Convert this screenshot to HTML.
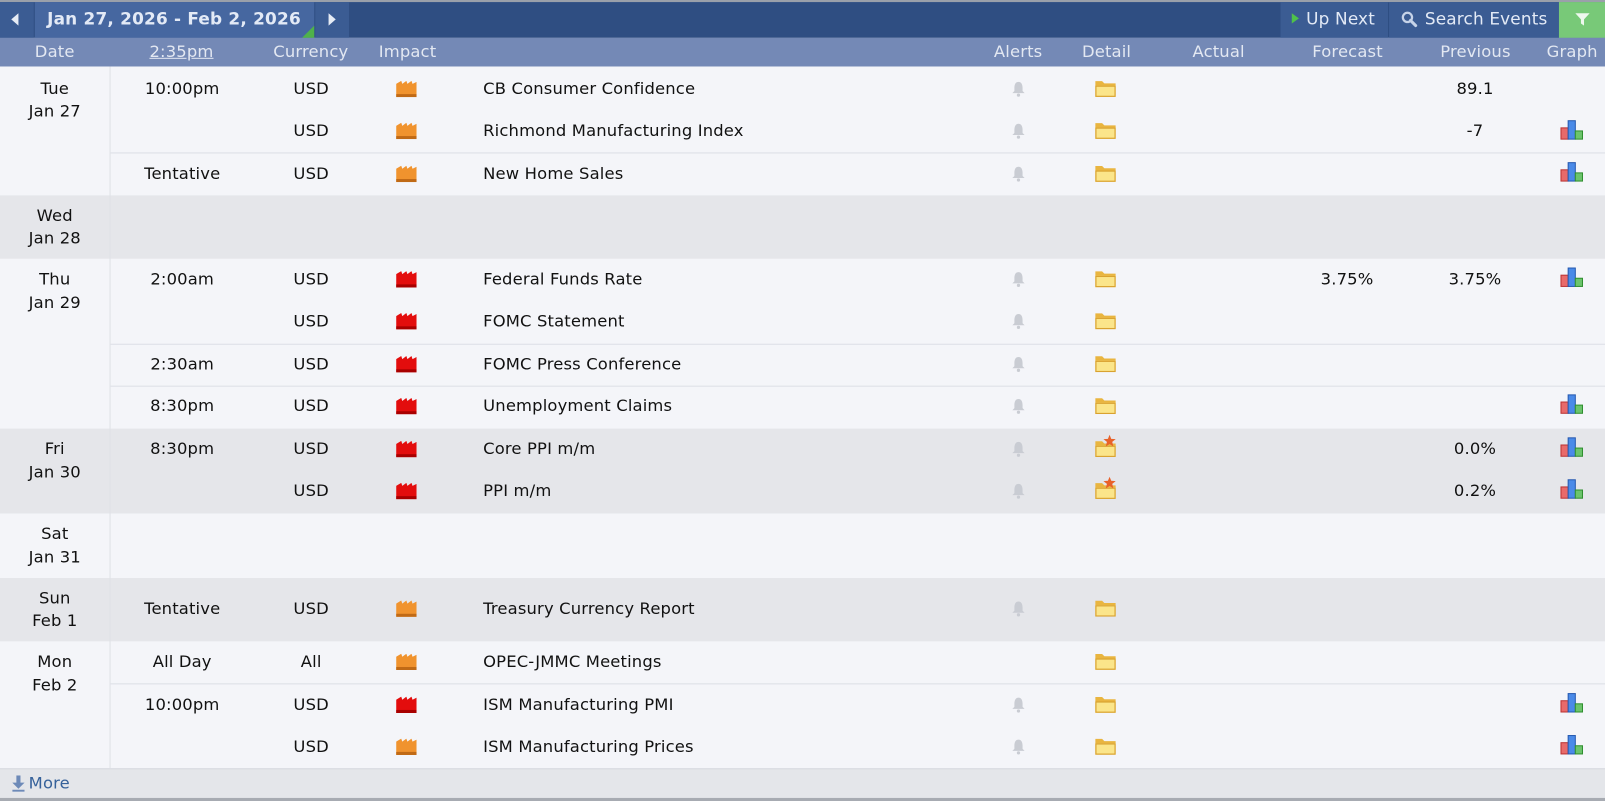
<!DOCTYPE html>
<html><head><meta charset="utf-8">
<style>
html,body{margin:0;padding:0;width:1605px;height:801px;overflow:hidden;background:#f4f5f9;}
#w{position:absolute;left:0;top:0;width:1568px;height:783px;transform-origin:0 0;transform:scale(1.02360,1.02299);font-family:"DejaVu Sans","Liberation Sans",sans-serif;font-size:16px;letter-spacing:0.15px;color:#111;}
.a{position:absolute;}
.t{position:absolute;transform:translateY(-50%);white-space:nowrap;line-height:20px;}
.c{text-align:center;}
.hd{position:absolute;top:50px;transform:translateY(-50%);color:#e3e8f2;font-size:16px;white-space:nowrap;}
.line{position:absolute;left:108px;right:0;height:1px;background:#dcdfe6;}
</style></head><body><div id="w">
<div class="a" style="left:0;top:0;width:1568px;height:2px;background:#9aa0aa"></div>
<div class="a" style="left:0;top:2px;width:1568px;height:35px;background:#2f4e82"></div>
<div class="a" style="left:0;top:2px;width:33px;height:35px;background:#3b5c93"></div>
<div class="a" style="left:11px;top:13px;width:0;height:0;border-top:6px solid transparent;border-bottom:6px solid transparent;border-right:7px solid #e6ecf5"></div>
<div class="a" style="left:34px;top:2px;width:273px;height:35px;background:#4667a0"></div>
<div class="a" style="left:295px;top:25px;width:0;height:0;border-left:12px solid transparent;border-bottom:12px solid #4fb24a"></div>
<div class="t" style="left:46px;top:19px;color:#e3eaf6;font-weight:bold;font-size:16.5px;letter-spacing:0.2px">Jan 27, 2026 - Feb 2, 2026</div>
<div class="a" style="left:308px;top:2px;width:33px;height:35px;background:#3b5c93"></div>
<div class="a" style="left:321px;top:13px;width:0;height:0;border-top:6px solid transparent;border-bottom:6px solid transparent;border-left:7px solid #e6ecf5"></div>
<div class="a" style="left:1251px;top:2px;width:105px;height:35px;background:#3b5c93"></div>
<div class="a" style="left:1262px;top:13px;width:0;height:0;border-top:5px solid transparent;border-bottom:5px solid transparent;border-left:7px solid #4fc24a"></div>
<div class="t" style="left:1276px;top:19px;color:#e3eaf6;font-size:16.5px">Up Next</div>
<div class="a" style="left:1357px;top:2px;width:166px;height:35px;background:#3b5c93"></div>
<svg class="a" style="left:1368px;top:10px" width="18" height="18" viewBox="0 0 18 18"><circle cx="7" cy="7" r="4.5" fill="none" stroke="#c6d3e8" stroke-width="2.2"/><path d="M10 10 L15 15" stroke="#c6d3e8" stroke-width="3" stroke-linecap="round"/></svg>
<div class="t" style="left:1392px;top:19px;color:#e3eaf6;font-size:16.5px">Search Events</div>
<div class="a" style="left:1523px;top:2px;width:45px;height:35px;background:#78c978"></div>
<svg class="a" style="left:1538px;top:11px" width="16" height="16" viewBox="0 0 16 16"><path d="M1 2 H15 L9.5 8 V14 L6.5 12 V8 Z" fill="#eef8ee"/></svg>
<div class="a" style="left:0;top:37px;width:1568px;height:28px;background:#7489b6"></div>
<div class="hd" style="left:34px">Date</div>
<div class="hd" style="left:146px;text-decoration:underline">2:35pm</div>
<div class="hd" style="left:267px">Currency</div>
<div class="hd" style="left:370px">Impact</div>
<div class="hd" style="left:971px">Alerts</div>
<div class="hd" style="left:1057px">Detail</div>
<div class="hd" style="left:1165px">Actual</div>
<div class="hd" style="left:1282px">Forecast</div>
<div class="hd" style="left:1407px">Previous</div>
<div class="hd" style="left:1511px">Graph</div>
<div class="a" style="left:0;top:65px;width:1568px;height:126px;background:#f4f5f9"></div>
<div class="a" style="left:0;top:191px;width:1568px;height:62px;background:#e5e6ea"></div>
<div class="a" style="left:0;top:253px;width:1568px;height:166px;background:#f4f5f9"></div>
<div class="a" style="left:0;top:419px;width:1568px;height:83px;background:#e5e6ea"></div>
<div class="a" style="left:0;top:502px;width:1568px;height:63px;background:#f4f5f9"></div>
<div class="a" style="left:0;top:565px;width:1568px;height:62px;background:#e5e6ea"></div>
<div class="a" style="left:0;top:627px;width:1568px;height:124px;background:#f4f5f9"></div>
<div class="a" style="left:0;top:751px;width:1568px;height:29px;background:#e4e6ea;border-top:1px solid #d6d9df"></div>
<div class="a" style="left:0;top:780px;width:1568px;height:3px;background:#a7abb2"></div>
<div class="a" style="left:107px;top:65px;width:1px;height:686px;background:#dfe1e6"></div>
<div class="line" style="top:149px"></div>
<div class="line" style="top:336px"></div>
<div class="line" style="top:377px"></div>
<div class="line" style="top:668px"></div>
<div class="t c" style="left:0;width:107px;top:87px">Tue</div><div class="t c" style="left:0;width:107px;top:109px">Jan 27</div>
<div class="t c" style="left:0;width:107px;top:211px">Wed</div><div class="t c" style="left:0;width:107px;top:233px">Jan 28</div>
<div class="t c" style="left:0;width:107px;top:273px">Thu</div><div class="t c" style="left:0;width:107px;top:296px">Jan 29</div>
<div class="t c" style="left:0;width:107px;top:439px">Fri</div><div class="t c" style="left:0;width:107px;top:462px">Jan 30</div>
<div class="t c" style="left:0;width:107px;top:522px">Sat</div><div class="t c" style="left:0;width:107px;top:545px">Jan 31</div>
<div class="t c" style="left:0;width:107px;top:585px">Sun</div><div class="t c" style="left:0;width:107px;top:607px">Feb 1</div>
<div class="t c" style="left:0;width:107px;top:647px">Mon</div><div class="t c" style="left:0;width:107px;top:670px">Feb 2</div>

<svg width="0" height="0" style="position:absolute">
<defs>
<symbol id="io" viewBox="0 0 20 16"><path d="M0 3 L5 0 L6 3 L10 0 L11 3 L15 0 L16 3 L20 1 V16 H0 Z" fill="#f0932e"/><rect x="0" y="13" width="20" height="3" fill="#c06a16"/></symbol>
<symbol id="ir" viewBox="0 0 20 16"><path d="M0 3 L5 0 L6 3 L10 0 L11 3 L15 0 L16 3 L20 1 V16 H0 Z" fill="#e30d0d"/><rect x="0" y="13" width="20" height="3" fill="#a80000"/></symbol>
<symbol id="bell" viewBox="0 0 14 16"><path d="M7 1 C4 1 3 4 3 7 V10 L1 12 H13 L11 10 V7 C11 4 10 1 7 1 Z" fill="#c9ccd3"/><circle cx="7" cy="14" r="1.6" fill="#c9ccd3"/></symbol>
<symbol id="fold" viewBox="0 0 20 16"><path d="M1 1 H7 L9 3 H19 V15 H1 Z" fill="#e9b540"/><path d="M1 5 H19 V15 H1 Z" fill="#fbe58a"/><rect x="1.5" y="5.5" width="17" height="9" fill="none" stroke="#d9a230" stroke-width="1"/></symbol>
<symbol id="gr" viewBox="0 0 24 20"><rect x="1" y="8" width="7" height="11" fill="#e86a6a" stroke="#b33" stroke-width="1"/><rect x="8" y="1" width="7" height="18" fill="#4a8ae8" stroke="#2559b0" stroke-width="1"/><rect x="15" y="11" width="7" height="8" fill="#6cc46c" stroke="#2f8f2f" stroke-width="1"/></symbol>
<symbol id="star" viewBox="0 0 12 12"><path d="M6 0 L7.6 4 L12 4.3 L8.6 7 L9.7 11.5 L6 9 L2.3 11.5 L3.4 7 L0 4.3 L4.4 4 Z" fill="#e8622a"/></symbol>
</defs></svg>

<div class="t c" style="left:120px;width:116px;top:87px">10:00pm</div>
<div class="t c" style="left:254px;width:100px;top:87px">USD</div>
<svg class="a" style="left:387px;top:79px" width="20" height="16"><use href="#io"/></svg>
<div class="t" style="left:472px;top:87px">CB Consumer Confidence</div>
<svg class="a" style="left:988px;top:79px" width="14" height="16"><use href="#bell"/></svg>
<svg class="a" style="left:1069px;top:78px" width="22" height="18"><use href="#fold"/></svg>
<div class="t c" style="left:1391px;width:100px;top:87px">89.1</div>

<div class="t c" style="left:254px;width:100px;top:128px">USD</div>
<svg class="a" style="left:387px;top:120px" width="20" height="16"><use href="#io"/></svg>
<div class="t" style="left:472px;top:128px">Richmond Manufacturing Index</div>
<svg class="a" style="left:988px;top:120px" width="14" height="16"><use href="#bell"/></svg>
<svg class="a" style="left:1069px;top:119px" width="22" height="18"><use href="#fold"/></svg>
<div class="t c" style="left:1391px;width:100px;top:128px">-7</div>
<svg class="a" style="left:1524px;top:117px" width="24" height="20"><use href="#gr"/></svg>

<div class="t c" style="left:120px;width:116px;top:170px">Tentative</div>
<div class="t c" style="left:254px;width:100px;top:170px">USD</div>
<svg class="a" style="left:387px;top:162px" width="20" height="16"><use href="#io"/></svg>
<div class="t" style="left:472px;top:170px">New Home Sales</div>
<svg class="a" style="left:988px;top:162px" width="14" height="16"><use href="#bell"/></svg>
<svg class="a" style="left:1069px;top:161px" width="22" height="18"><use href="#fold"/></svg>
<svg class="a" style="left:1524px;top:158px" width="24" height="20"><use href="#gr"/></svg>

<div class="t c" style="left:120px;width:116px;top:273px">2:00am</div>
<div class="t c" style="left:254px;width:100px;top:273px">USD</div>
<svg class="a" style="left:387px;top:265px" width="20" height="16"><use href="#ir"/></svg>
<div class="t" style="left:472px;top:273px">Federal Funds Rate</div>
<svg class="a" style="left:988px;top:265px" width="14" height="16"><use href="#bell"/></svg>
<svg class="a" style="left:1069px;top:264px" width="22" height="18"><use href="#fold"/></svg>
<div class="t c" style="left:1266px;width:100px;top:273px">3.75%</div>
<div class="t c" style="left:1391px;width:100px;top:273px">3.75%</div>
<svg class="a" style="left:1524px;top:261px" width="24" height="20"><use href="#gr"/></svg>

<div class="t c" style="left:254px;width:100px;top:314px">USD</div>
<svg class="a" style="left:387px;top:306px" width="20" height="16"><use href="#ir"/></svg>
<div class="t" style="left:472px;top:314px">FOMC Statement</div>
<svg class="a" style="left:988px;top:306px" width="14" height="16"><use href="#bell"/></svg>
<svg class="a" style="left:1069px;top:305px" width="22" height="18"><use href="#fold"/></svg>

<div class="t c" style="left:120px;width:116px;top:356px">2:30am</div>
<div class="t c" style="left:254px;width:100px;top:356px">USD</div>
<svg class="a" style="left:387px;top:348px" width="20" height="16"><use href="#ir"/></svg>
<div class="t" style="left:472px;top:356px">FOMC Press Conference</div>
<svg class="a" style="left:988px;top:348px" width="14" height="16"><use href="#bell"/></svg>
<svg class="a" style="left:1069px;top:347px" width="22" height="18"><use href="#fold"/></svg>

<div class="t c" style="left:120px;width:116px;top:397px">8:30pm</div>
<div class="t c" style="left:254px;width:100px;top:397px">USD</div>
<svg class="a" style="left:387px;top:389px" width="20" height="16"><use href="#ir"/></svg>
<div class="t" style="left:472px;top:397px">Unemployment Claims</div>
<svg class="a" style="left:988px;top:389px" width="14" height="16"><use href="#bell"/></svg>
<svg class="a" style="left:1069px;top:388px" width="22" height="18"><use href="#fold"/></svg>
<svg class="a" style="left:1524px;top:385px" width="24" height="20"><use href="#gr"/></svg>

<div class="t c" style="left:120px;width:116px;top:439px">8:30pm</div>
<div class="t c" style="left:254px;width:100px;top:439px">USD</div>
<svg class="a" style="left:387px;top:431px" width="20" height="16"><use href="#ir"/></svg>
<div class="t" style="left:472px;top:439px">Core PPI m/m</div>
<svg class="a" style="left:988px;top:431px" width="14" height="16"><use href="#bell"/></svg>
<svg class="a" style="left:1069px;top:430px" width="22" height="18"><use href="#fold"/></svg>
<svg class="a" style="left:1078px;top:425px" width="12" height="12"><use href="#star"/></svg>
<div class="t c" style="left:1391px;width:100px;top:439px">0.0%</div>
<svg class="a" style="left:1524px;top:427px" width="24" height="20"><use href="#gr"/></svg>

<div class="t c" style="left:254px;width:100px;top:480px">USD</div>
<svg class="a" style="left:387px;top:472px" width="20" height="16"><use href="#ir"/></svg>
<div class="t" style="left:472px;top:480px">PPI m/m</div>
<svg class="a" style="left:988px;top:472px" width="14" height="16"><use href="#bell"/></svg>
<svg class="a" style="left:1069px;top:471px" width="22" height="18"><use href="#fold"/></svg>
<svg class="a" style="left:1078px;top:466px" width="12" height="12"><use href="#star"/></svg>
<div class="t c" style="left:1391px;width:100px;top:480px">0.2%</div>
<svg class="a" style="left:1524px;top:468px" width="24" height="20"><use href="#gr"/></svg>

<div class="t c" style="left:120px;width:116px;top:595px">Tentative</div>
<div class="t c" style="left:254px;width:100px;top:595px">USD</div>
<svg class="a" style="left:387px;top:587px" width="20" height="16"><use href="#io"/></svg>
<div class="t" style="left:472px;top:595px">Treasury Currency Report</div>
<svg class="a" style="left:988px;top:587px" width="14" height="16"><use href="#bell"/></svg>
<svg class="a" style="left:1069px;top:586px" width="22" height="18"><use href="#fold"/></svg>

<div class="t c" style="left:120px;width:116px;top:647px">All Day</div>
<div class="t c" style="left:254px;width:100px;top:647px">All</div>
<svg class="a" style="left:387px;top:639px" width="20" height="16"><use href="#io"/></svg>
<div class="t" style="left:472px;top:647px">OPEC-JMMC Meetings</div>
<svg class="a" style="left:1069px;top:638px" width="22" height="18"><use href="#fold"/></svg>

<div class="t c" style="left:120px;width:116px;top:689px">10:00pm</div>
<div class="t c" style="left:254px;width:100px;top:689px">USD</div>
<svg class="a" style="left:387px;top:681px" width="20" height="16"><use href="#ir"/></svg>
<div class="t" style="left:472px;top:689px">ISM Manufacturing PMI</div>
<svg class="a" style="left:988px;top:681px" width="14" height="16"><use href="#bell"/></svg>
<svg class="a" style="left:1069px;top:680px" width="22" height="18"><use href="#fold"/></svg>
<svg class="a" style="left:1524px;top:677px" width="24" height="20"><use href="#gr"/></svg>

<div class="t c" style="left:254px;width:100px;top:730px">USD</div>
<svg class="a" style="left:387px;top:722px" width="20" height="16"><use href="#io"/></svg>
<div class="t" style="left:472px;top:730px">ISM Manufacturing Prices</div>
<svg class="a" style="left:988px;top:722px" width="14" height="16"><use href="#bell"/></svg>
<svg class="a" style="left:1069px;top:721px" width="22" height="18"><use href="#fold"/></svg>
<svg class="a" style="left:1524px;top:718px" width="24" height="20"><use href="#gr"/></svg>

<svg class="a" style="left:12px;top:758px" width="12" height="16" viewBox="0 0 12 16"><rect x="4" y="0" width="4" height="8" fill="#6d8ab8"/><path d="M0 7 H12 L6 13 Z" fill="#6d8ab8"/><rect x="0" y="14" width="12" height="2" fill="#6d8ab8"/></svg>
<div class="t" style="left:28px;top:766px;color:#35619a;font-size:16px">More</div>
</div></body></html>
